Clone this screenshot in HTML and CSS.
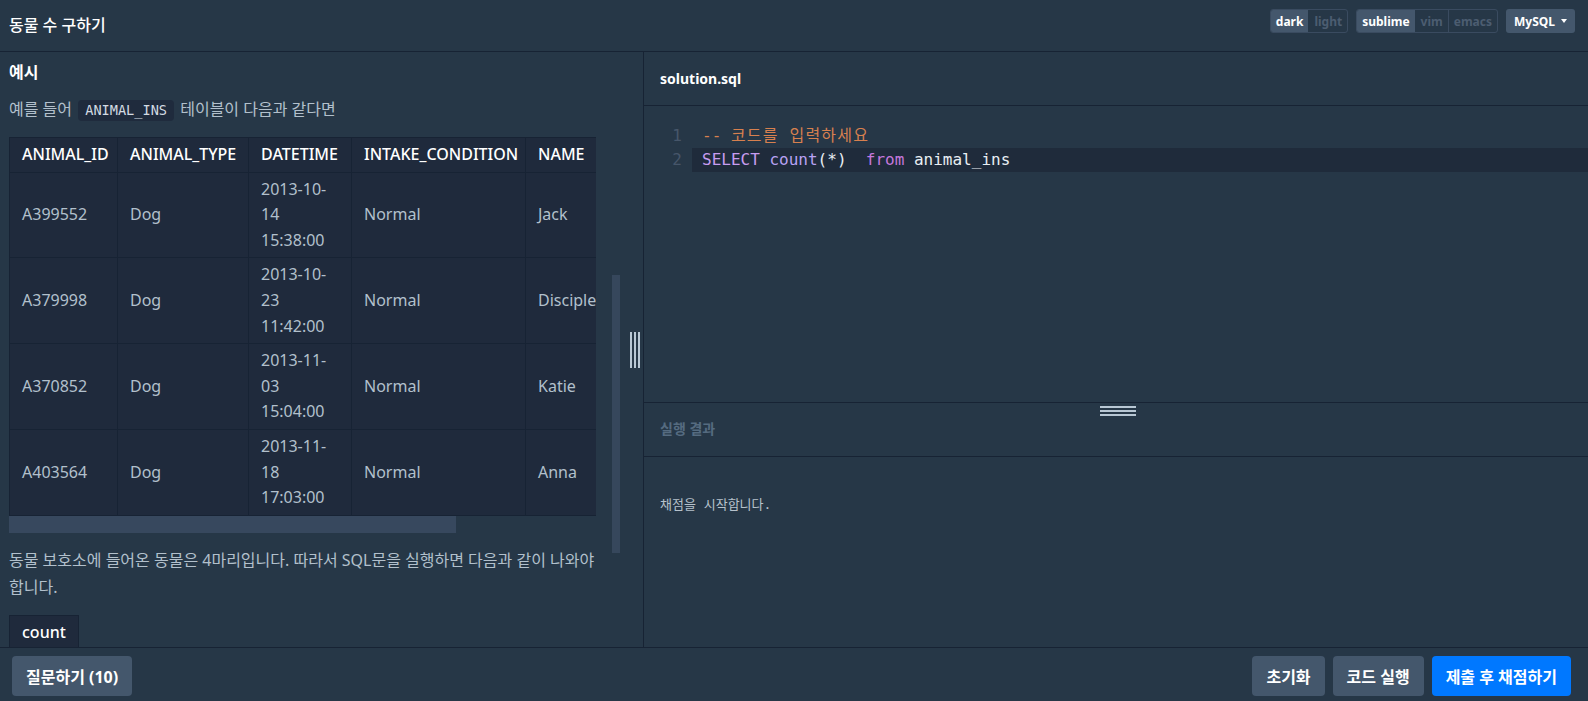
FILE: index.html
```html
<!DOCTYPE html>
<html lang="ko">
<head>
<meta charset="utf-8">
<title>동물 수 구하기</title>
<link rel="stylesheet" href="styles.css">
</head>
<body>
<div class="app">
  <header class="topbar">
    <div class="title">동물 수 구하기</div>
    <div class="controls">
      <div class="seg-group">
        <span class="seg active">dark</span>
        <span class="seg">light</span>
      </div>
      <div class="seg-group">
        <span class="seg active">sublime</span>
        <span class="seg">vim</span>
        <span class="seg">emacs</span>
      </div>
      <div class="lang-btn">MySQL <span class="caret"></span></div>
    </div>
  </header>

  <main class="workspace">
    <section class="left-pane">
      <div class="md-viewport">
        <div class="markdown">
          <h5 class="md-heading">예시</h5>
          <p class="md-text">예를 들어 <code class="code-pill">ANIMAL_INS</code> 테이블이 다음과 같다면</p>
          <div class="table-scroll">
            <table class="data-table">
              <colgroup>
                <col class="c-id"><col class="c-type"><col class="c-date"><col class="c-cond"><col class="c-name"><col class="c-sex">
              </colgroup>
              <thead>
                <tr><th>ANIMAL_ID</th><th>ANIMAL_TYPE</th><th>DATETIME</th><th>INTAKE_CONDITION</th><th>NAME</th><th>SEX_UPON_INTAKE</th></tr>
              </thead>
              <tbody>
                <tr><td>A399552</td><td>Dog</td><td>2013-10-14 15:38:00</td><td>Normal</td><td>Jack</td><td>Neutered Male</td></tr>
                <tr><td>A379998</td><td>Dog</td><td>2013-10-23 11:42:00</td><td>Normal</td><td>Disciple</td><td>Intact Male</td></tr>
                <tr><td>A370852</td><td>Dog</td><td>2013-11-03 15:04:00</td><td>Normal</td><td>Katie</td><td>Spayed Female</td></tr>
                <tr><td>A403564</td><td>Dog</td><td>2013-11-18 17:03:00</td><td>Normal</td><td>Anna</td><td>Spayed Female</td></tr>
              </tbody>
            </table>
          </div>
          <div class="hscroll"><div class="hscroll-thumb"></div></div>
          <p class="md-text">동물 보호소에 들어온 동물은 4마리입니다. 따라서 SQL문을 실행하면 다음과 같이 나와야 합니다.</p>
          <table class="data-table count-table">
            <thead><tr><th>count</th></tr></thead>
          </table>
        </div>
      </div>
      <div class="vthumb"></div>
      <div class="split-grip"><span></span><span></span><span></span></div>
    </section>

    <section class="right-pane">
      <div class="editor-tab">solution.sql</div>
      <div class="editor">
        <div class="code-line">
          <span class="ln">1</span>
          <span class="code"><span class="tk-comment">-- <span class="wide">코드를 입력하세요</span></span></span>
        </div>
        <div class="code-line active">
          <span class="ln">2</span>
          <span class="code"><span class="tk-kw">SELECT</span> <span class="tk-fn">count</span>(*)  <span class="tk-kw2">from</span> animal_ins</span>
        </div>
      </div>
      <div class="result">
        <div class="result-head">
          <span class="result-title">실행 결과</span>
          <div class="hgrip"><span></span><span></span><span></span></div>
        </div>
        <div class="result-body">채점을 시작합니다.</div>
      </div>
    </section>
  </main>

  <footer class="bottombar">
    <button class="btn">질문하기 (10)</button>
    <div class="btn-row">
      <button class="btn">초기화</button>
      <button class="btn">코드 실행</button>
      <button class="btn btn-primary">제출 후 채점하기</button>
    </div>
  </footer>
</div>
</body>
</html>
```

FILE: styles.css
```css
* { box-sizing: border-box; }

html, body {
  margin: 0;
  height: 100%;
}

body {
  background: #263747;
  color: #b2c0cc;
  font-family: "Noto Sans", "Noto Sans CJK KR", sans-serif;
  overflow: hidden;
}

.app {
  display: flex;
  flex-direction: column;
  height: 701px;
}

/* ---------- top bar ---------- */
.topbar {
  flex: none;
  height: 52px;
  display: flex;
  justify-content: space-between;
  border-bottom: 1px solid #172334;
  padding: 0 13px 0 9px;
}

.title {
  align-self: center;
  margin-top: -3px;
  font-size: 16px;
  font-weight: 500;
  color: #ffffff;
}

.controls {
  display: flex;
  align-items: flex-start;
  gap: 8px;
  margin-top: 9px;
}

.seg-group {
  display: flex;
  height: 24px;
  border: 1px solid #3a4b60;
  border-radius: 3px;
  overflow: hidden;
}

.seg {
  display: flex;
  align-items: center;
  padding: 0 5px;
  font-size: 12px;
  font-weight: 700;
  color: #4c5d71;
}

.seg + .seg { border-left: 1px solid #3a4b60; }

.seg.active {
  background: #44576c;
  color: #ffffff;
}

.seg.active + .seg { border-left-color: transparent; }

.lang-btn {
  display: flex;
  align-items: center;
  gap: 6px;
  height: 24px;
  padding: 0 8px;
  background: #44576c;
  border-radius: 3px;
  font-size: 12px;
  font-weight: 700;
  color: #ffffff;
}

.caret {
  width: 0;
  height: 0;
  border-left: 3.5px solid transparent;
  border-right: 3.5px solid transparent;
  border-top: 4px solid #ffffff;
}

/* ---------- workspace ---------- */
.workspace {
  flex: 1;
  min-height: 0;
  display: flex;
}

.left-pane {
  flex: none;
  width: 644px;
  border-right: 1px solid #172334;
  position: relative;
  overflow: hidden;
}

.md-viewport {
  margin-left: 9px;
  width: 587px;
  height: 100%;
  overflow: hidden;
}

.markdown { width: 604px; }

.md-heading {
  margin: 8px 0 12px;
  font-size: 16px;
  line-height: 24px;
  font-weight: 700;
  color: #ffffff;
}

.md-text {
  margin: 0 0 14px;
  font-size: 16px;
  line-height: 27px;
}

.code-pill {
  display: inline-block;
  margin: 0 2px;
  padding: 0 7px;
  height: 21px;
  line-height: 21px;
  background: #1f2b3d;
  border-radius: 4px;
  font-family: "DejaVu Sans Mono", monospace;
  font-size: 13.6px;
  color: #d3dbe3;
}

.table-scroll {
  width: 587px;
  overflow: hidden;
}

.hscroll {
  width: 587px;
  height: 17px;
  margin-bottom: 14px;
}

.hscroll-thumb {
  width: 447px;
  height: 100%;
  background: #37485e;
}

.data-table {
  border-collapse: collapse;
  font-size: 16px;
  line-height: 25.6px;
}

.table-scroll .data-table {
  table-layout: fixed;
  width: 813px;
}

.c-id { width: 108px; }
.c-type { width: 131px; }
.c-date { width: 103px; }
.c-cond { width: 174px; }
.c-name { width: 86px; }
.c-sex { width: 211px; }

.data-table th,
.data-table td {
  border: 1px solid #172334;
  background: #1f2a3c;
  padding: 4px 12px;
  text-align: left;
  vertical-align: middle;
  overflow: hidden;
}

.data-table th {
  color: #ffffff;
  font-weight: 500;
  white-space: nowrap;
}

.data-table td { color: #b2c0cc; }

.count-table { margin-bottom: 20px; }

.vthumb {
  position: absolute;
  left: 612px;
  top: 223px;
  width: 8px;
  height: 278px;
  background: #36475c;
}

.split-grip {
  position: absolute;
  left: 630px;
  top: 280px;
  display: flex;
  gap: 2px;
  height: 36px;
}

.split-grip span {
  width: 2px;
  background: #b8c7d4;
}

/* ---------- right pane ---------- */
.right-pane {
  flex: 1;
  min-width: 0;
  display: flex;
  flex-direction: column;
}

.editor-tab {
  flex: none;
  height: 54px;
  display: flex;
  align-items: center;
  padding-left: 16px;
  border-bottom: 1px solid #172334;
  font-size: 14px;
  font-weight: 700;
  color: #ffffff;
}

.editor {
  flex: 1;
  padding-top: 18px;
  font-family: "DejaVu Sans Mono", "Noto Sans CJK KR", monospace;
  font-size: 16px;
  line-height: 24px;
  color: #e8eef3;
}

.code-line {
  display: flex;
  height: 24px;
}

.ln {
  flex: none;
  width: 48px;
  padding-right: 10px;
  text-align: right;
  color: #46566a;
}

.code {
  flex: 1;
  padding-left: 10px;
  white-space: pre;
}

.code-line.active .code { background: #1f2b3b; }

.tk-comment { color: #d7804f; }
.tk-comment .wide { letter-spacing: 1.2px; }
.tk-kw { color: #c89cf0; }
.tk-fn { color: #b9a2f4; }
.tk-kw2 { color: #c678dd; }

.result {
  flex: none;
  height: 245px;
  border-top: 1px solid #172334;
  display: flex;
  flex-direction: column;
}

.result-head {
  flex: none;
  height: 54px;
  position: relative;
  display: flex;
  align-items: center;
  padding: 0 16px 4px;
  border-bottom: 1px solid #172334;
}

.result-title {
  font-size: 14px;
  font-weight: 700;
  color: #556b80;
}

.hgrip {
  position: absolute;
  left: 456px;
  top: 3px;
  display: flex;
  flex-direction: column;
  gap: 2px;
  width: 36px;
}

.hgrip span {
  height: 2px;
  background: #b8c7d4;
}

.result-body {
  padding: 38px 16px 0;
  font-family: "DejaVu Sans Mono", "Noto Sans CJK KR", monospace;
  font-size: 13px;
  line-height: 20px;
  color: #b6c2cc;
}

/* ---------- bottom bar ---------- */
.bottombar {
  flex: none;
  height: 54px;
  display: flex;
  justify-content: space-between;
  align-items: flex-start;
  padding: 8px 17px 0 12px;
  border-top: 1px solid #172334;
}

.btn-row {
  display: flex;
  gap: 8px;
}

.btn {
  height: 40px;
  padding: 0 14px;
  border: none;
  border-radius: 4px;
  background: #44576c;
  color: #ffffff;
  font-family: "Noto Sans", "Noto Sans CJK KR", sans-serif;
  font-size: 16px;
  font-weight: 700;
}

.btn-primary { background: #0078ff; }
```
